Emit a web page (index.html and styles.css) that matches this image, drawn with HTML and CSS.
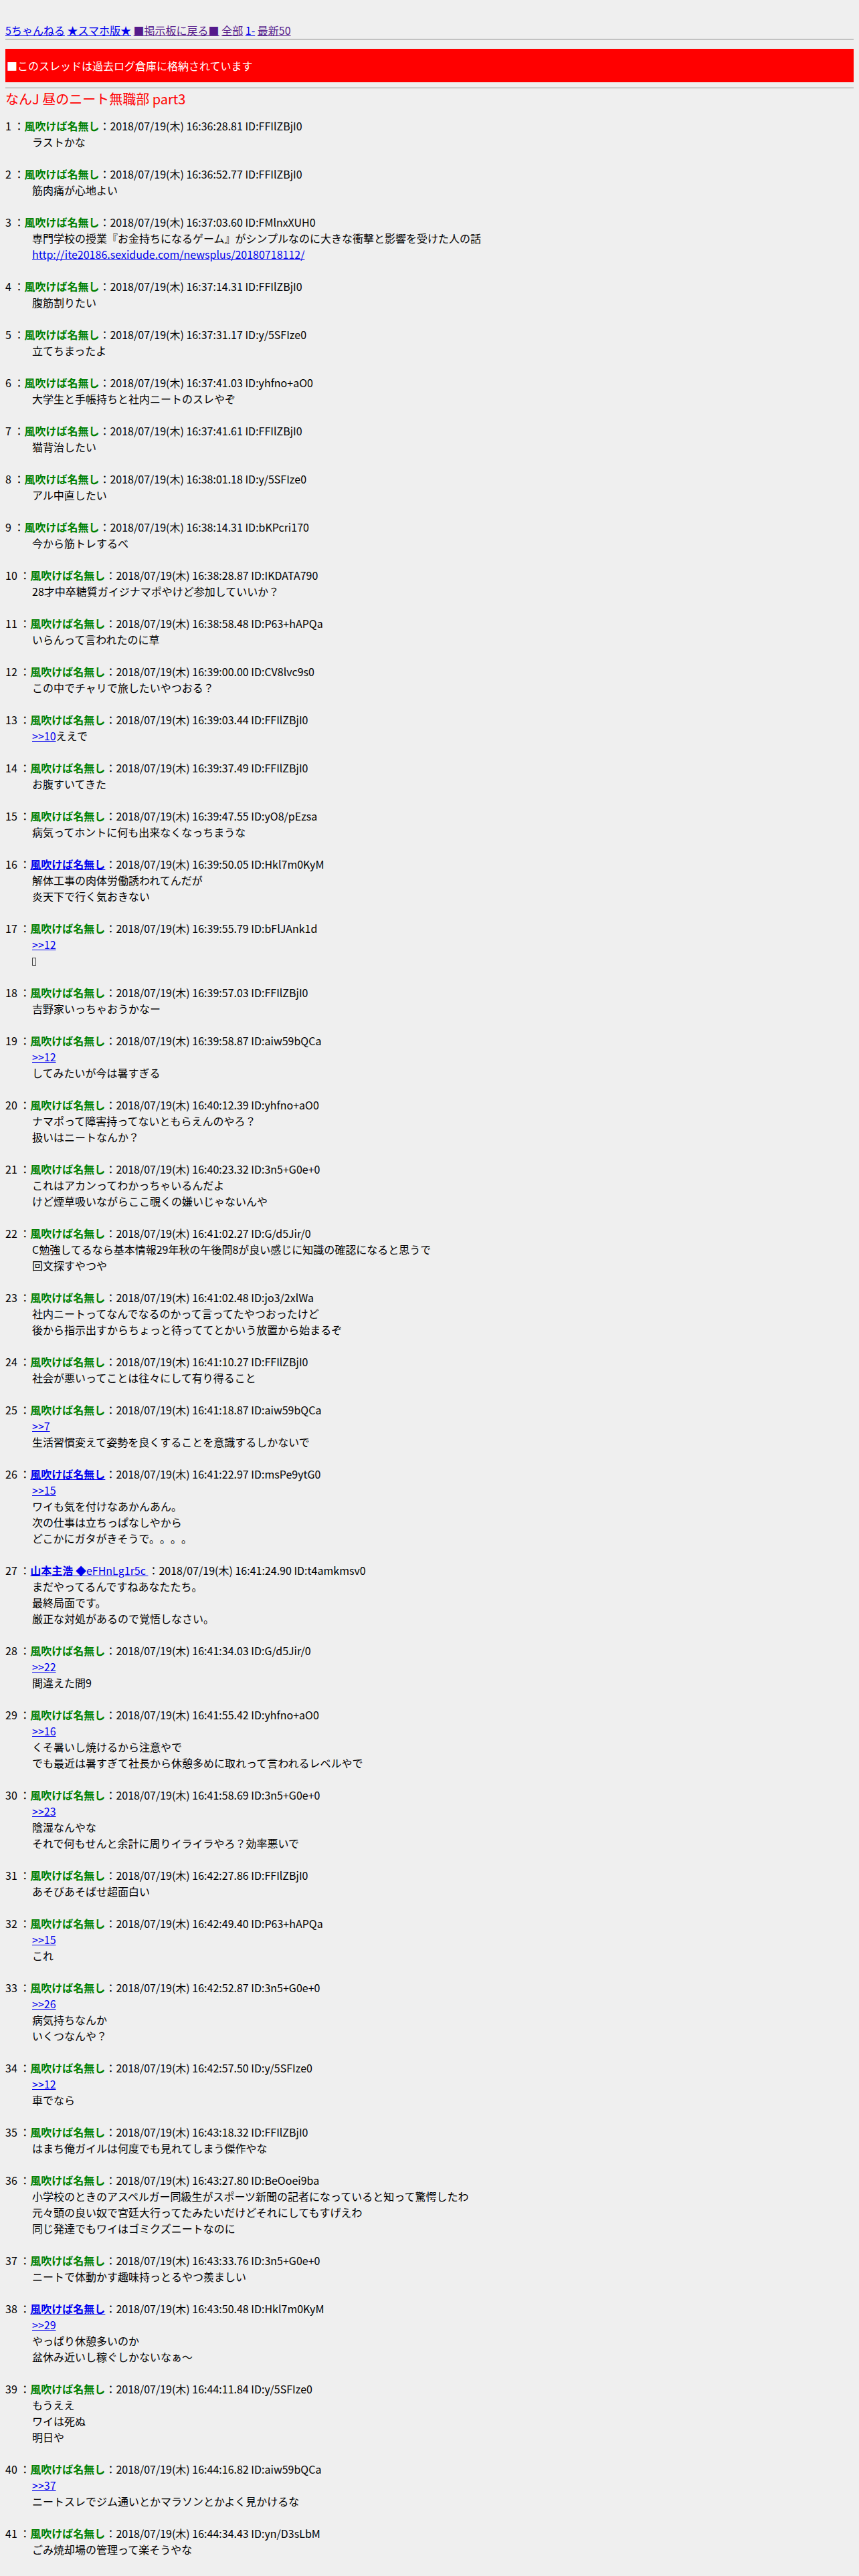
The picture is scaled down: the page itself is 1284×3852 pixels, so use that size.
FILE: index.html
```html
<!DOCTYPE html>
<html lang="ja">
<head>
<meta charset="utf-8">
<title>なんJ 昼のニート無職部 part3</title>
<link rel="stylesheet" href="styles.css">
</head>
<body>
<div class="nav"><a href="#" class="lnk">5ちゃんねる</a> <a href="#" class="lnk">★スマホ版★</a> <a href="#" class="lnk visited">■掲示板に戻る■</a> <a href="#" class="lnk visited">全部</a> <a href="#" class="lnk">1-</a> <a href="#" class="lnk visited">最新50</a></div>
<hr class="rule">
<div class="archived">■このスレッドは過去ログ倉庫に格納されています</div>
<hr class="rule rule-2">
<h1 class="title">なんJ 昼のニート無職部 part3</h1>
<dl class="thread">
<dt>1 ：<span class="name">風吹けば名無し</span>：2018/07/19(木) 16:36:28.81 ID:FFIlZBjI0</dt>
<dd>ラストかな</dd>
<dt>2 ：<span class="name">風吹けば名無し</span>：2018/07/19(木) 16:36:52.77 ID:FFIlZBjI0</dt>
<dd>筋肉痛が心地よい</dd>
<dt>3 ：<span class="name">風吹けば名無し</span>：2018/07/19(木) 16:37:03.60 ID:FMlnxXUH0</dt>
<dd>専門学校の授業『お金持ちになるゲーム』がシンプルなのに大きな衝撃と影響を受けた人の話<br><a href="#" class="lnk">http://ite20186.sexidude.com/newsplus/20180718112/</a></dd>
<dt>4 ：<span class="name">風吹けば名無し</span>：2018/07/19(木) 16:37:14.31 ID:FFIlZBjI0</dt>
<dd>腹筋割りたい</dd>
<dt>5 ：<span class="name">風吹けば名無し</span>：2018/07/19(木) 16:37:31.17 ID:y/5SFIze0</dt>
<dd>立てちまったよ</dd>
<dt>6 ：<span class="name">風吹けば名無し</span>：2018/07/19(木) 16:37:41.03 ID:yhfno+aO0</dt>
<dd>大学生と手帳持ちと社内ニートのスレやぞ</dd>
<dt>7 ：<span class="name">風吹けば名無し</span>：2018/07/19(木) 16:37:41.61 ID:FFIlZBjI0</dt>
<dd>猫背治したい</dd>
<dt>8 ：<span class="name">風吹けば名無し</span>：2018/07/19(木) 16:38:01.18 ID:y/5SFIze0</dt>
<dd>アル中直したい</dd>
<dt>9 ：<span class="name">風吹けば名無し</span>：2018/07/19(木) 16:38:14.31 ID:bKPcri170</dt>
<dd>今から筋トレするべ</dd>
<dt>10 ：<span class="name">風吹けば名無し</span>：2018/07/19(木) 16:38:28.87 ID:IKDATA790</dt>
<dd>28才中卒糖質ガイジナマポやけど参加していいか？</dd>
<dt>11 ：<span class="name">風吹けば名無し</span>：2018/07/19(木) 16:38:58.48 ID:P63+hAPQa</dt>
<dd>いらんって言われたのに草</dd>
<dt>12 ：<span class="name">風吹けば名無し</span>：2018/07/19(木) 16:39:00.00 ID:CV8lvc9s0</dt>
<dd>この中でチャリで旅したいやつおる？</dd>
<dt>13 ：<span class="name">風吹けば名無し</span>：2018/07/19(木) 16:39:03.44 ID:FFIlZBjI0</dt>
<dd><a href="#" class="lnk">&gt;&gt;10</a>ええで</dd>
<dt>14 ：<span class="name">風吹けば名無し</span>：2018/07/19(木) 16:39:37.49 ID:FFIlZBjI0</dt>
<dd>お腹すいてきた</dd>
<dt>15 ：<span class="name">風吹けば名無し</span>：2018/07/19(木) 16:39:47.55 ID:yO8/pEzsa</dt>
<dd>病気ってホントに何も出来なくなっちまうな</dd>
<dt>16 ：<a href="#" class="name-link">風吹けば名無し</a>：2018/07/19(木) 16:39:50.05 ID:Hkl7m0KyM</dt>
<dd>解体工事の肉体労働誘われてんだが<br>炎天下で行く気おきない</dd>
<dt>17 ：<span class="name">風吹けば名無し</span>：2018/07/19(木) 16:39:55.79 ID:bFlJAnk1d</dt>
<dd><a href="#" class="lnk">&gt;&gt;12</a><br><span class="tofu" aria-hidden="true"></span></dd>
<dt>18 ：<span class="name">風吹けば名無し</span>：2018/07/19(木) 16:39:57.03 ID:FFIlZBjI0</dt>
<dd>吉野家いっちゃおうかなー</dd>
<dt>19 ：<span class="name">風吹けば名無し</span>：2018/07/19(木) 16:39:58.87 ID:aiw59bQCa</dt>
<dd><a href="#" class="lnk">&gt;&gt;12</a><br>してみたいが今は暑すぎる</dd>
<dt>20 ：<span class="name">風吹けば名無し</span>：2018/07/19(木) 16:40:12.39 ID:yhfno+aO0</dt>
<dd>ナマポって障害持ってないともらえんのやろ？<br>扱いはニートなんか？</dd>
<dt>21 ：<span class="name">風吹けば名無し</span>：2018/07/19(木) 16:40:23.32 ID:3n5+G0e+0</dt>
<dd>これはアカンってわかっちゃいるんだよ<br>けど煙草吸いながらここ覗くの嫌いじゃないんや</dd>
<dt>22 ：<span class="name">風吹けば名無し</span>：2018/07/19(木) 16:41:02.27 ID:G/d5Jir/0</dt>
<dd>C勉強してるなら基本情報29年秋の午後問8が良い感じに知識の確認になると思うで<br>回文探すやつや</dd>
<dt>23 ：<span class="name">風吹けば名無し</span>：2018/07/19(木) 16:41:02.48 ID:jo3/2xlWa</dt>
<dd>社内ニートってなんでなるのかって言ってたやつおったけど<br>後から指示出すからちょっと待っててとかいう放置から始まるぞ</dd>
<dt>24 ：<span class="name">風吹けば名無し</span>：2018/07/19(木) 16:41:10.27 ID:FFIlZBjI0</dt>
<dd>社会が悪いってことは往々にして有り得ること</dd>
<dt>25 ：<span class="name">風吹けば名無し</span>：2018/07/19(木) 16:41:18.87 ID:aiw59bQCa</dt>
<dd><a href="#" class="lnk">&gt;&gt;7</a><br>生活習慣変えて姿勢を良くすることを意識するしかないで</dd>
<dt>26 ：<a href="#" class="name-link">風吹けば名無し</a>：2018/07/19(木) 16:41:22.97 ID:msPe9ytG0</dt>
<dd><a href="#" class="lnk">&gt;&gt;15</a><br>ワイも気を付けなあかんあん。<br>次の仕事は立ちっぱなしやから<br>どこかにガタがきそうで。。。。</dd>
<dt>27 ：<a href="#" class="name-link">山本主浩 <span class="trip">◆eFHnLg1r5c </span></a>：2018/07/19(木) 16:41:24.90 ID:t4amkmsv0</dt>
<dd>まだやってるんですねあなたたち。<br>最終局面です。<br>厳正な対処があるので覚悟しなさい。</dd>
<dt>28 ：<span class="name">風吹けば名無し</span>：2018/07/19(木) 16:41:34.03 ID:G/d5Jir/0</dt>
<dd><a href="#" class="lnk">&gt;&gt;22</a><br>間違えた問9</dd>
<dt>29 ：<span class="name">風吹けば名無し</span>：2018/07/19(木) 16:41:55.42 ID:yhfno+aO0</dt>
<dd><a href="#" class="lnk">&gt;&gt;16</a><br>くそ暑いし焼けるから注意やで<br>でも最近は暑すぎて社長から休憩多めに取れって言われるレベルやで</dd>
<dt>30 ：<span class="name">風吹けば名無し</span>：2018/07/19(木) 16:41:58.69 ID:3n5+G0e+0</dt>
<dd><a href="#" class="lnk">&gt;&gt;23</a><br>陰湿なんやな<br>それで何もせんと余計に周りイライラやろ？効率悪いで</dd>
<dt>31 ：<span class="name">風吹けば名無し</span>：2018/07/19(木) 16:42:27.86 ID:FFIlZBjI0</dt>
<dd>あそびあそばせ超面白い</dd>
<dt>32 ：<span class="name">風吹けば名無し</span>：2018/07/19(木) 16:42:49.40 ID:P63+hAPQa</dt>
<dd><a href="#" class="lnk">&gt;&gt;15</a><br>これ</dd>
<dt>33 ：<span class="name">風吹けば名無し</span>：2018/07/19(木) 16:42:52.87 ID:3n5+G0e+0</dt>
<dd><a href="#" class="lnk">&gt;&gt;26</a><br>病気持ちなんか<br>いくつなんや？</dd>
<dt>34 ：<span class="name">風吹けば名無し</span>：2018/07/19(木) 16:42:57.50 ID:y/5SFIze0</dt>
<dd><a href="#" class="lnk">&gt;&gt;12</a><br>車でなら</dd>
<dt>35 ：<span class="name">風吹けば名無し</span>：2018/07/19(木) 16:43:18.32 ID:FFIlZBjI0</dt>
<dd>はまち俺ガイルは何度でも見れてしまう傑作やな</dd>
<dt>36 ：<span class="name">風吹けば名無し</span>：2018/07/19(木) 16:43:27.80 ID:BeOoei9ba</dt>
<dd>小学校のときのアスペルガー同級生がスポーツ新聞の記者になっていると知って驚愕したわ<br>元々頭の良い奴で宮廷大行ってたみたいだけどそれにしてもすげえわ<br>同じ発達でもワイはゴミクズニートなのに</dd>
<dt>37 ：<span class="name">風吹けば名無し</span>：2018/07/19(木) 16:43:33.76 ID:3n5+G0e+0</dt>
<dd>ニートで体動かす趣味持っとるやつ羨ましい</dd>
<dt>38 ：<a href="#" class="name-link">風吹けば名無し</a>：2018/07/19(木) 16:43:50.48 ID:Hkl7m0KyM</dt>
<dd><a href="#" class="lnk">&gt;&gt;29</a><br>やっぱり休憩多いのか<br>盆休み近いし稼ぐしかないなぁ〜</dd>
<dt>39 ：<span class="name">風吹けば名無し</span>：2018/07/19(木) 16:44:11.84 ID:y/5SFIze0</dt>
<dd>もうええ<br>ワイは死ぬ<br>明日や</dd>
<dt>40 ：<span class="name">風吹けば名無し</span>：2018/07/19(木) 16:44:16.82 ID:aiw59bQCa</dt>
<dd><a href="#" class="lnk">&gt;&gt;37</a><br>ニートスレでジム通いとかマラソンとかよく見かけるな</dd>
<dt>41 ：<span class="name">風吹けば名無し</span>：2018/07/19(木) 16:44:34.43 ID:yn/D3sLbM</dt>
<dd>ごみ焼却場の管理って楽そうやな</dd>
</dl>
</body>
</html>
```

FILE: styles.css
```css
body {
  margin: 8px;
  background: #efefef;
  color: #000;
  font-family: "Noto Sans CJK JP", "Noto Sans", sans-serif;
  font-size: 16px;
  line-height: 24px;
  text-spacing-trim: space-all;
}

.lnk {
  color: #0000ee;
  text-decoration: underline;
}

.lnk.visited {
  color: #551a8b;
}

.nav {
  margin-top: 25px;
}

.rule {
  border: 0;
  height: 1px;
  background: #888;
  margin: 1px 0 0;
}

.rule-2 {
  margin-top: 8px;
}

.archived {
  margin-top: 14px;
  background: #ff0000;
  color: #fff;
  padding: 13px 2px;
}

.title {
  margin: 4px 0 0;
  font-size: 20px;
  line-height: 24px;
  font-weight: normal;
  color: #ff0000;
}

.thread {
  margin: 16px 0 0;
}

.thread dt {
  margin: 0;
}

.thread dd {
  margin: 0 0 0 40px;
  padding-bottom: 24px;
}

.name {
  color: #008000;
  font-weight: bold;
}

.name-link {
  color: #0000ee;
  font-weight: bold;
  text-decoration: underline;
}

.trip {
  font-weight: normal;
}

.tofu {
  display: inline-block;
  width: 4px;
  height: 10px;
  border: 1px solid #444;
  vertical-align: -1px;
}
```
